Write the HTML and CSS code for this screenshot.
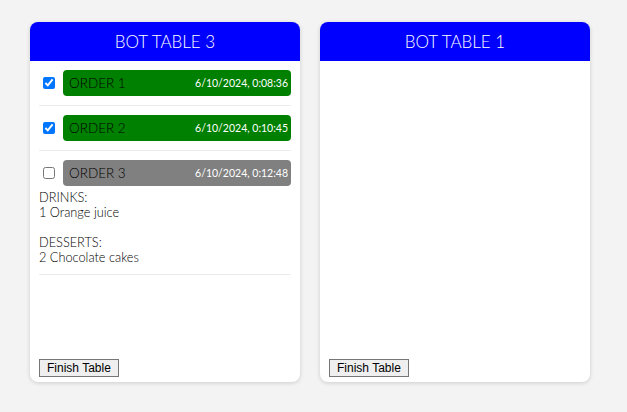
FILE: index.html
```html
<!DOCTYPE html>
<html>
<head>
<meta charset="utf-8">
<link rel="stylesheet" href="styles.css">
</head>
<body>
<div class="tables">
  <section class="card">
    <header class="card-head">BOT TABLE 3</header>
    <div class="card-body">
      <div class="order">
        <div class="order-row">
          <input type="checkbox" checked>
          <div class="order-bar done"><span class="order-name">ORDER 1</span><span class="order-time">6/10/2024, 0:08:36</span></div>
        </div>
      </div>
      <div class="order">
        <div class="order-row">
          <input type="checkbox" checked>
          <div class="order-bar done"><span class="order-name">ORDER 2</span><span class="order-time">6/10/2024, 0:10:45</span></div>
        </div>
      </div>
      <div class="order">
        <div class="order-row">
          <input type="checkbox">
          <div class="order-bar pending"><span class="order-name">ORDER 3</span><span class="order-time">6/10/2024, 0:12:48</span></div>
        </div>
        <div class="order-details">
          <div>DRINKS:</div>
          <div>1 Orange juice</div>
          <div class="spacer"></div>
          <div>DESSERTS:</div>
          <div>2 Chocolate cakes</div>
        </div>
      </div>
      <button class="finish">Finish Table</button>
    </div>
  </section>
  <section class="card">
    <header class="card-head">BOT TABLE 1</header>
    <div class="card-body">
      <button class="finish">Finish Table</button>
    </div>
  </section>
</div>
</body>
</html>
```
FILE: styles.css
```css
html, body {
  margin: 0;
  background: #f3f3f3;
}
body {
  font-family: "Lato", "DejaVu Sans", sans-serif;
  padding: 22px 30px;
}
.tables {
  display: flex;
  gap: 20px;
}
.card {
  width: 270px;
  height: 360px;
  background: #fff;
  border-radius: 8px;
  box-shadow: 0 1px 4px rgba(0, 0, 0, 0.16);
  display: flex;
  flex-direction: column;
  overflow: hidden;
}
.card-head {
  height: 39px;
  background: #0000ff;
  color: #fff;
  font-size: 17px;
  font-weight: 300;
  display: flex;
  align-items: center;
  justify-content: center;
}
.card-body {
  flex: 1;
  display: flex;
  flex-direction: column;
  padding: 0 9px 5px 9px;
}
.order {
  padding: 9px 0;
  border-bottom: 1px solid #ececec;
}
.order-row {
  display: flex;
  align-items: center;
}
.order-row input {
  width: 12px;
  height: 12px;
  margin: 0 4px 0 4px;
}
.order-bar {
  flex: 1;
  margin-left: 4px;
  height: 26px;
  border-radius: 4px;
  display: flex;
  align-items: center;
  justify-content: space-between;
  padding: 0 3px 0 6px;
}
.done { background: #008000; }
.pending { background: #808080; }
.order-name {
  font-size: 13.5px;
  font-weight: 300;
  color: #000;
}
.order-time {
  font-size: 10.5px;
  color: #fff;
}
.order-details {
  margin-top: 4px;
  font-size: 12.75px;
  font-weight: 300;
  line-height: 15px;
  color: #000;
}
.spacer { height: 15px; }
.finish {
  margin-top: auto;
  align-self: flex-start;
  font-family: "Liberation Sans", Arial, sans-serif;
  font-size: 12px;
  line-height: 14px;
  padding: 1px 7px;
  border: 1px solid #767676;
  border-radius: 0;
  background: #efefef;
  color: #000;
}
```
